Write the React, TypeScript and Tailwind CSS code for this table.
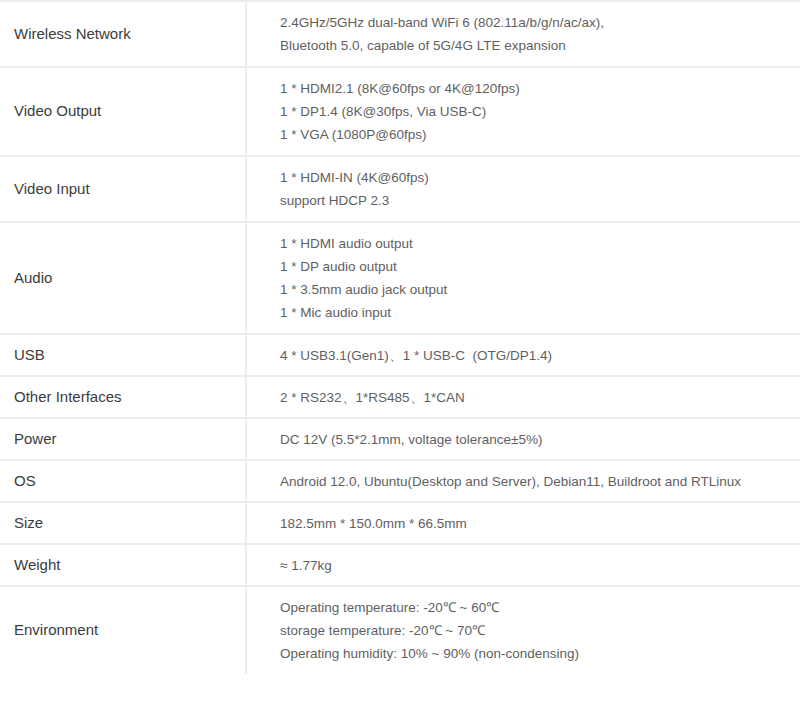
import React from 'react';

// Spec rows: label on the left, one line per entry on the right
interface SpecRow {
  label: string;
  values: string[];
}

const specs: SpecRow[] = [
  {
    label: 'Wireless Network',
    values: [
      '2.4GHz/5GHz dual-band WiFi 6 (802.11a/b/g/n/ac/ax),',
      'Bluetooth 5.0, capable of 5G/4G LTE expansion',
    ],
  },
  {
    label: 'Video Output',
    values: [
      '1 * HDMI2.1 (8K@60fps or 4K@120fps)',
      '1 * DP1.4 (8K@30fps, Via USB-C)',
      '1 * VGA (1080P@60fps)',
    ],
  },
  {
    label: 'Video Input',
    values: ['1 * HDMI-IN (4K@60fps)', 'support HDCP 2.3'],
  },
  {
    label: 'Audio',
    values: [
      '1 * HDMI audio output',
      '1 * DP audio output',
      '1 * 3.5mm audio jack output',
      '1 * Mic audio input',
    ],
  },
  { label: 'USB', values: ['4 * USB3.1(Gen1)、1 * USB-C  (OTG/DP1.4)'] },
  { label: 'Other Interfaces', values: ['2 * RS232、1*RS485、1*CAN'] },
  { label: 'Power', values: ['DC 12V (5.5*2.1mm, voltage tolerance±5%)'] },
  {
    label: 'OS',
    values: ['Android 12.0, Ubuntu(Desktop and Server), Debian11, Buildroot and RTLinux'],
  },
  { label: 'Size', values: ['182.5mm * 150.0mm * 66.5mm'] },
  { label: 'Weight', values: ['≈ 1.77kg'] },
  {
    label: 'Environment',
    values: [
      'Operating temperature: -20℃ ~ 60℃',
      'storage temperature: -20℃ ~ 70℃',
      'Operating humidity: 10% ~ 90% (non-condensing)',
    ],
  },
];

const App: React.FC = () => {
  return (
    <div className="w-[800px] h-[701px] bg-white font-['Liberation_Sans',Arial,sans-serif]">
      <div className="flex flex-col">
        {specs.map((row) => (
          <div key={row.label} className="flex border-t-2 border-[#ececec]">
            <div className="w-[247px] shrink-0 flex items-center pl-[14px] border-r-2 border-[#ececec] text-[15px] text-[#3c3c3c]">
              {row.label}
            </div>
            <div
              className={
                'flex-1 pl-[33px] pt-[9px] text-[13.5px] leading-[23px] text-[#5f5f5f] whitespace-pre ' +
                (row.values.length > 1 ? 'pb-[9px]' : 'pb-[8px]')
              }
            >
              {row.values.map((v) => (
                <div key={v}>{v}</div>
              ))}
            </div>
          </div>
        ))}
      </div>
    </div>
  );
};

export default App;
